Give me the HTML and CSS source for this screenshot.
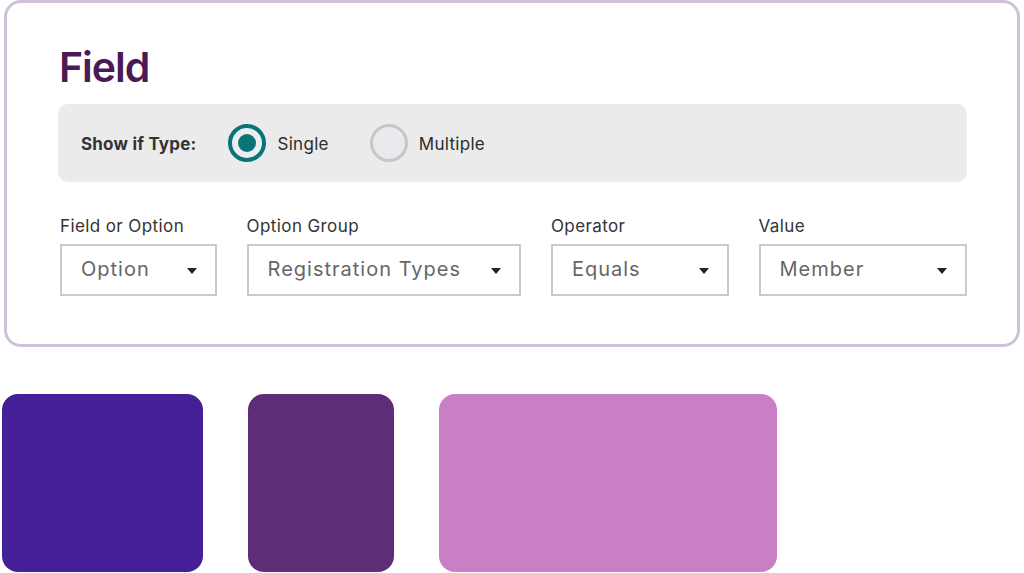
FILE: index.html
```html
<!DOCTYPE html>
<html lang="en">
<head>
<meta charset="utf-8">
<title>Field</title>
<link rel="stylesheet" href="styles.css">
</head>
<body>
  <section class="card">
    <h1 class="title">Field</h1>
    <div class="type-bar">
      <span class="type-label">Show if Type:</span>
      <label class="radio">
        <span class="radio-ring checked"><span class="radio-dot"></span></span>
        <span class="radio-text">Single</span>
      </label>
      <label class="radio">
        <span class="radio-ring"></span>
        <span class="radio-text">Multiple</span>
      </label>
    </div>
    <div class="fields">
      <div class="field col-1">
        <span class="field-label">Field or Option</span>
        <div class="select"><span class="select-value">Option</span><span class="caret"></span></div>
      </div>
      <div class="field col-2">
        <span class="field-label">Option Group</span>
        <div class="select"><span class="select-value">Registration Types</span><span class="caret"></span></div>
      </div>
      <div class="field col-3">
        <span class="field-label">Operator</span>
        <div class="select"><span class="select-value">Equals</span><span class="caret"></span></div>
      </div>
      <div class="field col-4">
        <span class="field-label">Value</span>
        <div class="select"><span class="select-value">Member</span><span class="caret"></span></div>
      </div>
    </div>
  </section>
  <div class="swatches">
    <div class="swatch swatch-indigo"></div>
    <div class="swatch swatch-plum"></div>
    <div class="swatch swatch-orchid"></div>
  </div>
</body>
</html>
```

FILE: styles.css
```css
* { box-sizing: border-box; }

html, body {
  margin: 0;
  padding: 0;
  background: #ffffff;
  font-family: Inter, "Noto Sans", "DejaVu Sans", sans-serif;
  overflow: hidden;
}

.card {
  margin: 0 0 0 4px;
  width: 1016px;
  height: 347px;
  border: 3px solid #cfc1d9;
  border-radius: 17px;
  padding: 39px 50px 0 51px;
}

.title {
  margin: 0 0 0 1px;
  font-size: 41px;
  line-height: 50px;
  font-weight: 600;
  color: #4a1a56;
  letter-spacing: -1px;
}

.type-bar {
  margin-top: 12px;
  height: 78px;
  background: #ebebeb;
  border-radius: 10px;
  display: flex;
  align-items: center;
  padding-left: 23px;
}

.type-label {
  font-size: 17px;
  font-weight: 700;
  color: #333333;
  margin-right: 32px;
  margin-top: 2px;
  letter-spacing: 0.2px;
}

.radio {
  display: flex;
  align-items: center;
  margin-right: 41px;
}

.radio-ring {
  width: 38px;
  height: 38px;
  border-radius: 50%;
  border: 3px solid #c7c7c7;
  background: #e9e9ee;
  display: flex;
  align-items: center;
  justify-content: center;
}

.radio-ring.checked {
  border: 4px solid #0b7478;
  background: #eceff1;
}

.radio-dot {
  width: 18px;
  height: 18px;
  border-radius: 50%;
  background: #0b7478;
}

.radio-text {
  margin-left: 11px;
  margin-top: 2px;
  font-size: 17px;
  color: #2b2b2b;
  letter-spacing: 0.3px;
}

.fields {
  margin-top: 34px;
  display: flex;
  gap: 30px;
  padding-left: 2px;
}

.field {
  display: flex;
  flex-direction: column;
}

.col-1 { width: 157px; }
.col-2 { width: 275px; }
.col-3 { width: 178px; }
.col-4 { width: 209px; }

.field-label {
  font-size: 17px;
  line-height: 20px;
  color: #333333;
  margin-bottom: 8px;
  letter-spacing: 0.4px;
}

.select {
  height: 52px;
  border: 2px solid #cbcbcb;
  display: flex;
  align-items: center;
  justify-content: space-between;
  padding: 0 18px 3px 19px;
}

.select-value {
  font-size: 20px;
  color: #666666;
  letter-spacing: 1px;
}

.caret {
  width: 0;
  height: 0;
  border-left: 5px solid transparent;
  border-right: 5px solid transparent;
  border-top: 6px solid #222222;
  margin-top: 4px;
}

.swatches {
  margin: 47px 0 0 2px;
  display: flex;
}

.swatch {
  height: 178px;
  border-radius: 16px;
}

.swatch-indigo { width: 201px; background: #451f97; }
.swatch-plum { width: 146px; background: #5f2d78; margin-left: 45px; }
.swatch-orchid { width: 338px; background: #c97fc5; margin-left: 45px; }
```
